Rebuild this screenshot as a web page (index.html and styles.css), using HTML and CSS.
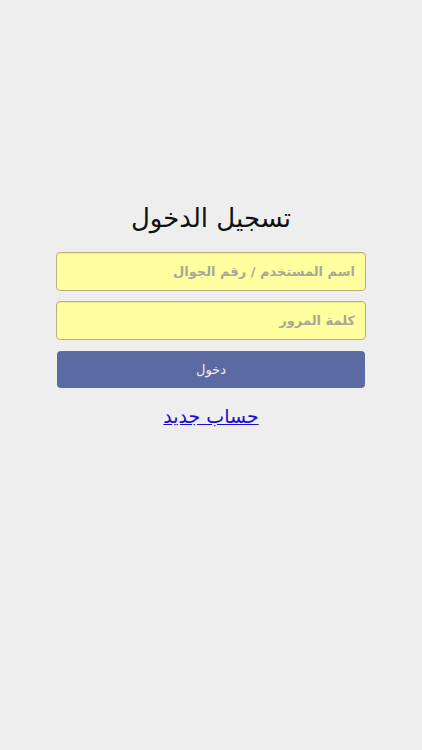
FILE: index.html
```html
<!DOCTYPE html>
<html lang="ar" dir="rtl">
<head>
  <meta charset="UTF-8" />
  <meta name="viewport" content="width=device-width, initial-scale=1.0" />
  <title>تسجيل الدخول</title>
  <link rel="stylesheet" href="styles.css">
</head>
<body>
  <div class="login">
    <h2>تسجيل الدخول</h2>
    <input type="text" class="field" placeholder="اسم المستخدم / رقم الجوال" />
    <input type="password" class="field" placeholder="كلمة المرور" />
    <button class="submit">دخول</button>
    <a href="#" class="register">حساب جديد</a>
  </div>
</body>
</html>
```

FILE: styles.css
```css
html, body {
  margin: 0;
  padding: 0;
  height: 100%;
  background-color: #eeeeee;
  font-family: "DejaVu Sans", sans-serif;
  color: #111;
}

.login {
  width: 310px;
  margin: 0 auto;
  padding-top: 201px;
  display: flex;
  flex-direction: column;
  align-items: center;
}

h2 {
  margin: 0 0 17px 0;
  font-size: 26px;
  font-weight: normal;
  line-height: 34px;
}

.field {
  width: 310px;
  height: 39px;
  margin-bottom: 10px;
  padding: 0 10px;
  box-sizing: border-box;
  border: 1px solid #b8b27a;
  border-radius: 4px;
  background-color: #ffff9f;
  font-family: "DejaVu Sans", sans-serif;
  font-size: 13px;
  font-weight: bold;
  box-shadow: inset 0 1px 1px rgba(0,0,0,0.08);
}

.field::placeholder {
  color: #a8a898;
}

.submit {
  width: 308px;
  height: 37px;
  margin-top: 1px;
  border: none;
  border-radius: 4px;
  background-color: #5b6aa3;
  color: #f0f0f0;
  font-family: "DejaVu Sans", sans-serif;
  font-size: 13px;
}

.register {
  margin-top: 17px;
  color: #1a0dcc;
  font-size: 19px;
}
```
